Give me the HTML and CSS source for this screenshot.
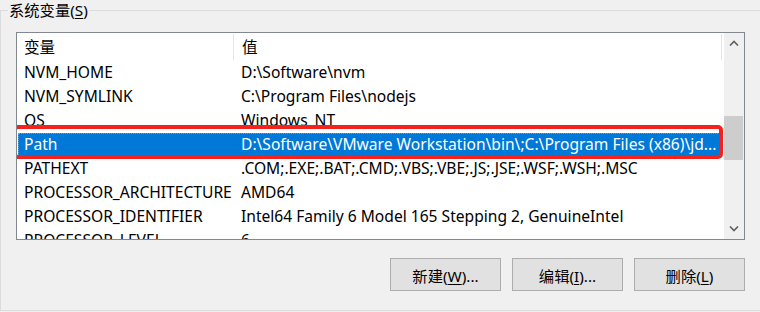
FILE: index.html
```html
<!DOCTYPE html>
<html lang="zh-CN">
<head>
<meta charset="utf-8">
<link rel="stylesheet" href="styles.css">
</head>
<body>
<fieldset class="group">
  <legend class="group-title">系统变量(<u>S</u>)</legend>
  <div class="listbox">
    <div class="list">
      <div class="header">
        <div class="hcell col-name">变量</div>
        <div class="hcell col-value">值</div>
      </div>
      <div class="row"><div class="cell col-name">NVM_HOME</div><div class="cell col-value">D:\Software\nvm</div></div>
      <div class="row"><div class="cell col-name">NVM_SYMLINK</div><div class="cell col-value">C:\Program Files\nodejs</div></div>
      <div class="row"><div class="cell col-name">OS</div><div class="cell col-value">Windows_NT</div></div>
      <div class="row selected"><div class="cell col-name">Path</div><div class="cell col-value">D:\Software\VMware Workstation\bin\;C:\Program Files (x86)\jd...</div><div class="highlight"></div></div>
      <div class="row"><div class="cell col-name">PATHEXT</div><div class="cell col-value">.COM;.EXE;.BAT;.CMD;.VBS;.VBE;.JS;.JSE;.WSF;.WSH;.MSC</div></div>
      <div class="row"><div class="cell col-name">PROCESSOR_ARCHITECTURE</div><div class="cell col-value">AMD64</div></div>
      <div class="row"><div class="cell col-name">PROCESSOR_IDENTIFIER</div><div class="cell col-value">Intel64 Family 6 Model 165 Stepping 2, GenuineIntel</div></div>
      <div class="row"><div class="cell col-name">PROCESSOR_LEVEL</div><div class="cell col-value">6</div></div>
    </div>
    <div class="scrollbar">
      <div class="arrow">
        <svg width="10" height="6" viewBox="0 0 10 6"><path d="M1 5.5 L5 1.5 L9 5.5" fill="none" stroke="#606060" stroke-width="1.6"/></svg>
      </div>
      <div class="track">
        <div class="thumb"></div>
      </div>
      <div class="arrow">
        <svg width="10" height="6" viewBox="0 0 10 6"><path d="M1 0.5 L5 4.5 L9 0.5" fill="none" stroke="#606060" stroke-width="1.6"/></svg>
      </div>
    </div>
  </div>
  <div class="buttons">
    <button class="btn">新建(<u>W</u>)...</button>
    <button class="btn">编辑(<u>I</u>)...</button>
    <button class="btn">删除(<u>L</u>)</button>
  </div>
</fieldset>
</body>
</html>
```
FILE: styles.css
```css
html, body {
  margin: 0;
  padding: 0;
  background: #f0f0f0;
  overflow: hidden;
}
body {
  font-family: "Noto Sans", "Noto Sans CJK SC", sans-serif;
  font-size: 15.6px;
  color: #000;
  width: 760px;
  height: 312px;
}
.group {
  margin: 0;
  padding: 12px 0 19px 15px;
  width: 790px;
  border: 1px solid #dcdcdc;
  box-sizing: border-box;
}
.group-title {
  margin-left: -8px;
  padding: 0 1px;
  line-height: 20px;
  height: 20px;
  font-size: 15.3px;
}
.group-title u, .btn u {
  text-decoration-thickness: 1px;
  text-underline-offset: 2px;
}
.listbox {
  width: 729px;
  height: 208px;
  border: 1px solid #828790;
  box-sizing: border-box;
  background: #fff;
  display: flex;
}
.list {
  flex: 1;
  overflow: hidden;
  position: relative;
}
.header {
  height: 28px;
  display: flex;
  align-items: center;
}
.hcell {
  height: 26px;
  display: flex;
  align-items: center;
  border-right: 1px solid #e5e5e5;
  box-sizing: border-box;
  padding-bottom: 2px;
}
.row {
  height: 24px;
  display: flex;
  align-items: center;
  position: relative;
  white-space: nowrap;
  padding-bottom: 2px;
  box-sizing: border-box;
}
.col-name {
  width: 217px;
  padding-left: 7px;
  box-sizing: border-box;
  flex: none;
}
.col-value {
  flex: 1;
  padding-left: 7px;
}
.hcell.col-value {
  padding-left: 8px;
  flex: none;
  width: 488px;
}
.cell {
  overflow: hidden;
}
.row.selected {
  background: #0078d7;
  color: #fff;
  margin: 0 2px 0 1px;
  outline: 1px dotted rgba(255,255,255,0.35);
  outline-offset: -1px;
}
.row.selected .col-name {
  width: 216px;
  padding-left: 6px;
}
.highlight {
  position: absolute;
  left: -5px;
  top: -8px;
  width: 710px;
  height: 34px;
  border: 4px solid #f5211c;
  border-radius: 5px;
  box-sizing: border-box;
}
.scrollbar {
  width: 20px;
  background: #f0f0f0;
  display: flex;
  flex-direction: column;
}
.arrow {
  height: 20px;
  display: flex;
  align-items: center;
  justify-content: center;
  padding-right: 1px;
}
.track {
  flex: 1;
  padding-top: 63px;
}
.thumb {
  width: 19px;
  height: 44px;
  background: #cdcdcd;
}
.buttons {
  width: 729px;
  display: flex;
  justify-content: flex-end;
  gap: 11px;
  margin-top: 18px;
}
.btn {
  width: 111px;
  height: 33px;
  margin: 0;
  padding: 0;
  background: #e1e1e1;
  border: 1px solid #adadad;
  font-family: "Noto Sans", "Noto Sans CJK SC", sans-serif;
  font-size: 15.3px;
  color: #000;
}
```
